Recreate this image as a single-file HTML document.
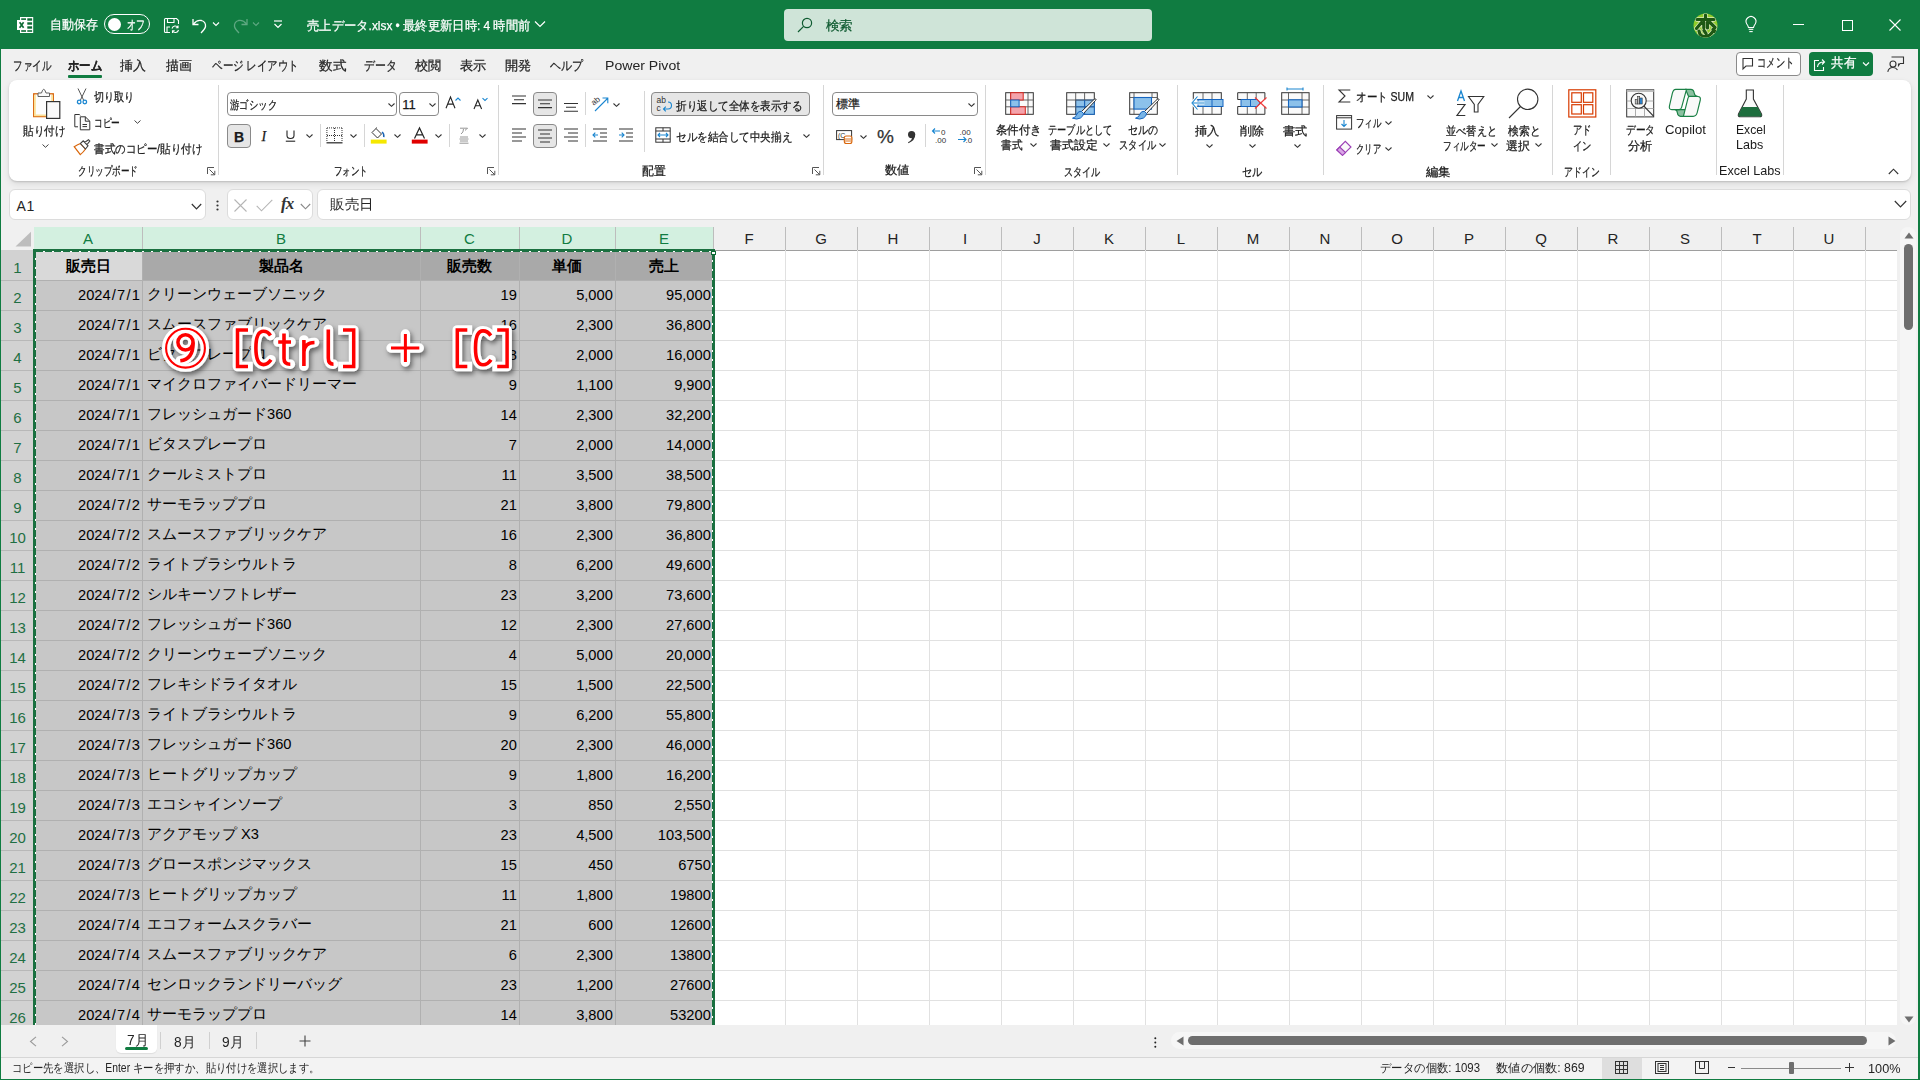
<!DOCTYPE html><html><head><meta charset="utf-8"><style>*{box-sizing:border-box}
html,body{margin:0;padding:0}
body{width:1920px;height:1080px;overflow:hidden;position:relative;background:#f0f0f0;font-family:"Liberation Sans",sans-serif;color:#242424}
.a{position:absolute}
svg{position:absolute;overflow:visible}
#title{position:absolute;left:0;top:0;width:1920px;height:49px;background:#107c41;color:#fff}
#bl{position:absolute;left:0;top:49px;width:1px;height:1032px;background:#107c41;z-index:50}
#br{position:absolute;left:1918px;top:49px;width:2px;height:1032px;background:#107c41;z-index:50}
#bb{position:absolute;left:0;top:1079px;width:1920px;height:1px;background:#107c41;z-index:50}
.tt{position:absolute;white-space:nowrap;font-size:13px;line-height:16px}
.mt{position:absolute;top:57px;font-size:13px;line-height:16px;white-space:nowrap;color:#242424}
#ribbon{position:absolute;left:9px;top:80px;width:1902px;height:101px;background:#fff;border-radius:8px;box-shadow:0 1px 2px rgba(0,0,0,.16),0 3px 7px rgba(0,0,0,.09)}
.rt{position:absolute;font-size:12px;line-height:14px;white-space:nowrap;color:#1a1a1a}
.sep{position:absolute;width:1px;background:#d6d6d6}
.btnp{position:absolute;background:#e6e6e6;border:1px solid #8a8a8a;border-radius:4px}
.box{position:absolute;background:#fff;border:1px solid #8a8a8a;border-radius:4px}
/* formula */
.fbox{position:absolute;top:189px;height:31px;background:#fff;border:1px solid #dcdcdc;border-radius:6px}
/* grid */
#grid{position:absolute;left:0;top:0}
.ch{position:absolute;top:227px;height:23px;background:#f0f0f0;color:#242424;font-size:15px;line-height:23px;text-align:center}
.ch.sel{background:#d3f0e0;color:#107c41}
.chl{position:absolute;top:227px;height:23px;width:1px;background:#bdbdbd}
.chline{position:absolute;left:1px;top:250px;width:1896px;height:1px;background:#9e9e9e}
.corner{position:absolute;left:1px;top:227px;width:33px;height:23px;background:#f0f0f0}
.rh{position:absolute;left:1px;width:33px;height:30px;background:#d2d2d2;color:#1f6f43;font-size:15px;line-height:30px;text-align:center;padding-top:2.5px}
.rhl{position:absolute;left:1px;width:33px;height:1px;background:#b8b8b8}
.selbg{position:absolute;left:34px;top:250px;width:679px;height:775px;background:#c7c7c7}
.hdrbg{position:absolute;left:142px;top:250px;width:571px;height:30px;background:#a9a9a9}
.a1bg{position:absolute;left:34px;top:250px;width:108px;height:30px;background:#d9d9d9}
.hl{position:absolute;left:713px;width:1184px;height:1px;background:#e1e1e1}
.hls{position:absolute;left:34px;width:679px;height:1px;background:#b0b0b0}
.vl{position:absolute;top:250px;width:1px;height:775px;background:#e1e1e1}
.vls{position:absolute;top:250px;width:1px;height:775px;background:#b0b0b0}
.ct{position:absolute;height:30px;font-size:14.67px;line-height:30px;white-space:nowrap;color:#000;padding-top:2px}
.ct.b{font-weight:bold;text-align:center;padding-top:1px}
.ct.l{padding-left:5px}
.ct.r{text-align:right;padding-right:2.2px}
.selb{position:absolute;left:33px;top:249px;width:682px;height:800px;border:3px solid #1a7040}
.sl{padding:0 1.2px}
.antt{position:absolute;left:36px;top:251px;width:676px;height:1px;background:repeating-linear-gradient(90deg,#fff 0 2px,transparent 2px 9px);background-position:-2px 0}
.antl{position:absolute;left:35px;top:252px;width:1px;height:773px;background:repeating-linear-gradient(180deg,#fff 0 2px,transparent 2px 9px);background-position:0 6px}
.antr{position:absolute;left:712px;top:252px;width:1px;height:773px;background:repeating-linear-gradient(180deg,#fff 0 2px,transparent 2px 9px);background-position:0 8px}
.mt{font-size:12.5px;margin-top:-1px}
.rt,.mt,.tt{-webkit-text-stroke:0.25px currentColor}

</style></head><body>
<div id="title">
<svg style="left:17px;top:17px" width="17" height="16" viewBox="0 0 17 16">
<rect x="3" y="0" width="13.2" height="16" fill="#fff"/>
<g fill="#0b6a33"><rect x="4.2" y="1.3" width="4.8" height="1.6"/><rect x="10.3" y="1.3" width="4.8" height="2.4"/><rect x="10.3" y="5.3" width="4.8" height="2.4"/><rect x="10.3" y="9.3" width="4.8" height="2.4"/><rect x="4.2" y="13.2" width="4.8" height="1.6"/><rect x="10.3" y="13.2" width="4.8" height="1.6"/></g>
<rect x="0" y="3" width="9.2" height="10" fill="#fff"/>
<path d="M2.6 5.2 L6.6 10.8 M6.6 5.2 L2.6 10.8" stroke="#0b6a33" stroke-width="1.6"/>
</svg>
<div class="tt" style="transform:scaleX(0.923);transform-origin:0 0;left:50px;top:17px;font-size:12.5px">自動保存</div>
<div class="a" style="left:104px;top:14px;width:46px;height:20px;border:1.3px solid #fff;border-radius:10px"></div>
<div class="a" style="left:108px;top:17.5px;width:13px;height:13px;border-radius:50%;background:#fff"></div>
<div class="tt" style="transform:scaleX(0.692);transform-origin:0 0;left:127px;top:17px;font-size:12.5px">オフ</div>
<svg style="left:163px;top:17px" width="17" height="17" viewBox="0 0 17 17" fill="none" stroke="#fff" stroke-width="1.1">
<path d="M7 15.5 H2.5 Q1.5 15.5 1.5 14.5 V2.5 Q1.5 1.5 2.5 1.5 H13.5 L15.5 3.5 V7"/>
<path d="M4.5 1.5 V5.5 H11 V1.5"/>
<path d="M4 15.5 V10 H7"/>
<path d="M9 11.5 A3.3 3.3 0 0 1 15 10.5 M15 8.5 V10.8 H12.8"/>
<path d="M15.5 13 A3.3 3.3 0 0 1 9.5 14 M9.5 16 V13.7 H11.7"/>
</svg>
<svg style="left:191px;top:17px" width="18" height="17" viewBox="0 0 18 17" fill="none" stroke="#fff" stroke-width="1.3">
<path d="M2 2 V7.5 H7.5"/><path d="M2.5 7 Q6 2.5 10.5 3.5 Q15 5 14.5 9.5 Q14 12 10 16"/>
</svg>
<svg style="left:212px;top:21px" width="8" height="6" viewBox="0 0 8 6" fill="none" stroke="#fff" stroke-width="1.1"><path d="M1 1.5 L4 4.5 L7 1.5"/></svg>
<svg style="left:231px;top:17px" width="18" height="17" viewBox="0 0 18 17" fill="none" stroke="#5fa882" stroke-width="1.3">
<path d="M16 2 V7.5 H10.5"/><path d="M15.5 7 Q12 2.5 7.5 3.5 Q3 5 3.5 9.5 Q4 12 8 16"/>
</svg>
<svg style="left:252px;top:21px" width="8" height="6" viewBox="0 0 8 6" fill="none" stroke="#5fa882" stroke-width="1.1"><path d="M1 1.5 L4 4.5 L7 1.5"/></svg>
<svg style="left:273px;top:20px" width="10" height="9" viewBox="0 0 10 9" fill="none" stroke="#fff" stroke-width="1.2"><path d="M1 1 H9"/><path d="M1.5 4 L5 7.5 L8.5 4"/></svg>
<div class="tt" style="transform:scaleX(0.948);transform-origin:0 0;left:307px;top:18px;font-size:12.5px">売上データ.xlsx • 最終更新日時: 4 時間前</div>
<svg style="left:534px;top:20px" width="12" height="8" viewBox="0 0 12 8" fill="none" stroke="#fff" stroke-width="1.2"><path d="M1 1.5 L6 6.5 L11 1.5"/></svg>
<div class="a" style="left:784px;top:9px;width:368px;height:32px;background:#cfe4d8;border-radius:4px"></div>
<svg style="left:797px;top:17px" width="16" height="16" viewBox="0 0 16 16" fill="none" stroke="#0e5a30" stroke-width="1.2"><circle cx="10" cy="6" r="4.6"/><path d="M6.6 9.4 L1 15"/></svg>
<div class="tt" style="transform:scaleX(1.038);transform-origin:0 0;left:825.6px;top:18px;font-size:13px;color:#0e5a30">検索</div>
<svg style="left:1692.5px;top:12.5px" width="25" height="25" viewBox="0 0 25 25">
<defs><clipPath id="avc"><circle cx="12.5" cy="12.5" r="12"/></clipPath></defs>
<g clip-path="url(#avc)">
<rect x="0" y="0" width="25" height="25" fill="#8fcb2a"/>
<g stroke="#e6efd5" stroke-width="4.6" fill="none" stroke-linecap="round" opacity=".9">
<path d="M4 6.5 H21 M12.5 2 V6.5 M8.5 9.5 L3.5 15.5 M10.8 9 V15 M14.5 9 V15 M17 9.5 L22 14.5 M6 18 Q7 24.5 13 23.5 Q17.5 22.5 19.5 19 M11 17.5 L13 20.5 M20 16.5 L23 19.5"/>
</g>
<g stroke="#1d5713" stroke-width="3.2" fill="none" stroke-linecap="round">
<path d="M4 6.5 H21 M12.5 2 V6.5 M8.5 9.5 L3.5 15.5 M10.8 9 V15 M14.5 9 V15 M17 9.5 L22 14.5 M6 18 Q7 24.5 13 23.5 Q17.5 22.5 19.5 19 M11 17.5 L13 20.5 M20 16.5 L23 19.5"/>
</g>
<path d="M0 0 H25 V4.5 H0 Z" fill="#1d5713" opacity=".0"/>
</g>
</svg>
<svg style="left:1745px;top:17px" width="12" height="16" viewBox="0 0 12 16" fill="none" stroke="#fff" stroke-width="1.1"><path d="M3.5 10.5 Q3 8.5 1.8 7 A4.9 4.9 0 1 1 10.2 7 Q9 8.5 8.5 10.5 Z"/><path d="M3.7 12.3 H8.3"/><path d="M4.3 14.6 H7.7"/></svg>
<div class="a" style="left:1793px;top:24px;width:11px;height:1px;background:#fff"></div>
<div class="a" style="left:1842px;top:19.5px;width:11px;height:11px;border:1px solid #fff"></div>
<svg style="left:1889px;top:19px" width="12" height="12" viewBox="0 0 12 12" stroke="#fff" stroke-width="1.1"><path d="M0.5 0.5 L11.5 11.5 M11.5 0.5 L0.5 11.5"/></svg>
</div>

<!-- tabs -->
<div class="mt" style="transform:scaleX(0.731);transform-origin:0 0;left:13px;top:58.5px">ファイル</div>
<div class="mt" style="transform:scaleX(0.872);transform-origin:0 0;left:68px;top:58.5px;font-weight:bold">ホーム</div>
<div class="a" style="left:68px;top:75px;width:34px;height:2.5px;border-radius:1px;background:#107c41"></div>
<div class="mt" style="transform:scaleX(0.992);transform-origin:0 0;left:120.4px;top:58.5px">挿入</div>
<div class="mt" style="transform:scaleX(0.992);transform-origin:0 0;left:165.6px;top:58.5px">描画</div>
<div class="mt" style="transform:scaleX(0.809);transform-origin:0 0;left:211.6px;top:58.5px">ページ レイアウト</div>
<div class="mt" style="transform:scaleX(1.046);transform-origin:0 0;left:318.8px;top:58.5px">数式</div>
<div class="mt" style="transform:scaleX(0.841);transform-origin:0 0;left:363.8px;top:58.5px">データ</div>
<div class="mt" style="transform:scaleX(1.012);transform-origin:0 0;left:415.3px;top:58.5px">校閲</div>
<div class="mt" style="transform:scaleX(1.012);transform-origin:0 0;left:460.3px;top:58.5px">表示</div>
<div class="mt" style="transform:scaleX(1.012);transform-origin:0 0;left:505.3px;top:58.5px">開発</div>
<div class="mt" style="transform:scaleX(0.844);transform-origin:0 0;left:550.3px;top:58.5px">ヘルプ</div>
<div class="mt" style="transform:scaleX(1.043);transform-origin:0 0;left:604.8px;top:58.5px;-webkit-text-stroke:0;font-size:13.5px">Power Pivot</div>
<!-- comment / share -->
<div class="a" style="left:1736px;top:52px;width:65px;height:24px;border:1px solid #8a8a8a;border-radius:4px;background:#fff"></div>
<svg style="left:1741px;top:57px" width="13" height="14" viewBox="0 0 13 14" fill="none" stroke="#333" stroke-width="1.1"><path d="M1.5 1.5 H11.5 V9 H5 L2 12 V1.5 Z"/></svg>
<div class="mt" style="transform:scaleX(0.712);transform-origin:0 0;left:1757px;top:56px">コメント</div>
<div class="a" style="left:1809px;top:52px;width:64px;height:24px;border-radius:4px;background:#107c41"></div>
<svg style="left:1813px;top:56px" width="15" height="16" viewBox="0 0 15 16" fill="none" stroke="#fff" stroke-width="1.1"><path d="M6 4.5 H1.5 V14.5 H10.5 V11"/><path d="M4.5 11 Q5 6 11 6 M9 3.5 L11.5 6 L9 8.5"/></svg>
<div class="mt" style="transform:scaleX(0.962);transform-origin:0 0;left:1831px;top:56px;color:#fff">共有</div>
<svg style="left:1862px;top:61px" width="8" height="6" viewBox="0 0 8 6" fill="none" stroke="#fff" stroke-width="1.1"><path d="M1 1.5 L4 4.5 L7 1.5"/></svg>
<svg style="left:1887px;top:56px" width="18" height="17" viewBox="0 0 18 17" fill="none" stroke="#333" stroke-width="1.1"><circle cx="6" cy="8" r="3"/><path d="M0.8 15.8 Q1.5 11.5 6 11.5 Q9 11.5 10.5 14"/><path d="M4.5 1 H16.5 V7.5 H13 L11.5 9.5 V7.5"/></svg>
<!-- ribbon panel -->
<div id="ribbon"></div>
<!-- clipboard group -->
<svg style="left:32px;top:88px" width="30" height="32" viewBox="0 0 30 32">
<rect x="1.7" y="5.8" width="19.6" height="22.8" fill="#fdfdfd" stroke="#d9660b" stroke-width="1.3"/>
<path d="M2.9 7 V27.4 H20.1 V7" fill="none" stroke="#fbe199" stroke-width="1.8"/>
<path d="M6 5 H9.5 Q10.5 1.3 11.7 1.3 Q13 1.3 14 5 H17.5 V8.5 H6 Z" fill="#fafafa" stroke="#616161" stroke-width="1"/>
<rect x="14.6" y="13.6" width="13.2" height="16.8" fill="#fafafa" stroke="#333" stroke-width="1.2"/>
</svg>
<div class="rt" style="transform:scaleX(0.881);transform-origin:0 0;left:23.3px;top:124px">貼り付け</div>
<svg style="left:42px;top:143.5px" width="7" height="4" viewBox="0 0 7 4" fill="none" stroke="#424242" stroke-width="1"><path d="M0.5 0.5 L3.5 3.3 L6.5 0.5"/></svg>
<svg style="left:76px;top:88px" width="12" height="17" viewBox="0 0 12 17" fill="none" stroke-width="1">
<path d="M2 0.5 L7.7 12.3 M10 0.5 L4.3 12.3" stroke="#555"/><circle cx="3.2" cy="14" r="1.8" stroke="#1a86d0" stroke-width="1.3"/><circle cx="8.8" cy="14" r="1.8" stroke="#1a86d0" stroke-width="1.3"/>
</svg>
<div class="rt" style="transform:scaleX(0.844);transform-origin:0 0;left:94.4px;top:90.2px">切り取り</div>
<svg style="left:73px;top:113px" width="18" height="18" viewBox="0 0 18 18" fill="none" stroke="#333" stroke-width="1">
<path d="M5 13.8 H1.8 V1.5 H6.3 L7.3 2.3"/><path d="M7.3 3.8 H12.3 L16.8 8.2 V16.8 H7.3 Z" fill="#fafafa"/><path d="M12.3 3.8 V8.2 H16.8"/><path d="M9.5 11.5 H14 M9.5 13.6 H14"/>
</svg>
<div class="rt" style="transform:scaleX(0.728);transform-origin:0 0;left:94.4px;top:116px">コピー</div>
<svg style="left:133.5px;top:120.3px" width="7" height="4" viewBox="0 0 7 4" fill="none" stroke="#424242" stroke-width="1"><path d="M0.5 0.5 L3.5 3.3 L6.5 0.5"/></svg>
<svg style="left:73px;top:139px" width="18" height="17" viewBox="0 0 18 17">
<path d="M1.5 8 L9 13.3 L7 15.8 Z" fill="#fbe199"/>
<path d="M1.2 7.7 Q5 5.5 7.5 4.5 L12.5 10 Q10.5 13 7.3 15.6 Z" fill="#fff" stroke="#d9660b" stroke-width="1.2"/>
<path d="M7.5 4.5 L10.2 1.8 L15 6.8 L12.5 10 Z M11.5 3.5 L15.5 0.7 L16.8 2 L13.8 5.8" fill="#fff" stroke="#424242" stroke-width="1.1"/>
</svg>
<div class="rt" style="transform:scaleX(0.876);transform-origin:0 0;left:94.4px;top:141.7px">書式のコピー/貼り付け</div>
<div class="rt" style="transform:scaleX(0.714);transform-origin:0 0;left:78.3px;top:164px">クリップボード</div>
<svg style="left:207px;top:167px" width="9" height="9" viewBox="0 0 9 9" fill="none" stroke="#555" stroke-width="1"><path d="M0.5 7 V0.5 H7"/><path d="M2.5 2.5 L7.8 7.8 M3.8 7.8 H7.8 V3.8"/></svg>
<div class="sep" style="left:218px;top:85px;height:90px"></div>
<!-- font group -->
<div class="box" style="left:227px;top:92px;width:170px;height:24px"></div>
<div class="rt" style="transform:scaleX(0.783);transform-origin:0 0;left:229.8px;top:98px">游ゴシック</div>
<svg style="left:387.5px;top:102.5px" width="7" height="4" viewBox="0 0 7 4" fill="none" stroke="#333" stroke-width="1.1"><path d="M0.5 0.5 L3.5 3.3 L6.5 0.5"/></svg>
<div class="box" style="left:399px;top:92px;width:40px;height:24px"></div>
<div class="rt" style="transform:scaleX(1.000);transform-origin:0 0;left:402.3px;top:96.5px;font-size:13px;line-height:16px">11</div>
<svg style="left:429px;top:102.5px" width="7" height="4" viewBox="0 0 7 4" fill="none" stroke="#333" stroke-width="1.1"><path d="M0.5 0.5 L3.5 3.3 L6.5 0.5"/></svg>
<svg style="left:445px;top:96px" width="18" height="13" viewBox="0 0 18 13" fill="none" stroke-width="1.1"><path d="M1 12.3 L5.5 1 L10 12.3 M2.8 8.1 H8.2" stroke="#242424"/><path d="M10.5 4.5 L13 2 L15.5 4.5" stroke="#1a86d0"/></svg>
<svg style="left:473px;top:96.5px" width="15" height="13" viewBox="0 0 15 13" fill="none" stroke-width="1.1"><path d="M1 12 L4.8 3 L8.6 12 M2.5 8.8 H7.1" stroke="#242424"/><path d="M9.5 1.2 L12 3.5 L14.5 1.2" stroke="#1a86d0"/></svg>
<div class="btnp" style="left:227px;top:124px;width:24px;height:24px"></div>
<div class="rt" style="left:234px;top:128.5px;font-size:14px;line-height:16px;font-weight:bold">B</div>
<div class="rt" style="left:261.5px;top:128.5px;font-size:14px;line-height:16px;font-family:'Liberation Serif',serif;font-style:italic">I</div>
<svg style="left:285px;top:130px" width="11" height="12" viewBox="0 0 11 12" fill="none" stroke="#242424" stroke-width="1.1"><path d="M2 0.5 V5.5 Q2 8.5 5.5 8.5 Q9 8.5 9 5.5 V0.5"/><path d="M0.8 11.2 H10.2"/></svg>
<svg style="left:306px;top:134px" width="7" height="4" viewBox="0 0 7 4" fill="none" stroke="#333" stroke-width="1.1"><path d="M0.5 0.5 L3.5 3.3 L6.5 0.5"/></svg>
<div class="sep" style="left:320px;top:124px;height:23px"></div>
<svg style="left:326px;top:127px" width="17" height="17" viewBox="0 0 17 17" fill="none" stroke="#333" stroke-width="1" stroke-dasharray="1 1"><path d="M0.9 1 V15 M16 1 V15 M1 0.9 H16 M8.5 1 V15 M1 8.5 H16"/><path d="M0.5 15.8 H16.5" stroke-dasharray="none" stroke-width="1.3"/></svg>
<svg style="left:350px;top:134px" width="7" height="4" viewBox="0 0 7 4" fill="none" stroke="#333" stroke-width="1.1"><path d="M0.5 0.5 L3.5 3.3 L6.5 0.5"/></svg>
<div class="sep" style="left:364px;top:124px;height:23px"></div>
<svg style="left:370px;top:127px" width="17" height="17" viewBox="0 0 17 17"><path d="M6 1.5 L11.5 7 L7.5 11 L2 5.5 Z M6 1.5 L6.5 0.5" fill="none" stroke="#333" stroke-width="1"/><path d="M12 5 Q14.2 6.5 13.8 10.2" fill="none" stroke="#1a64b5" stroke-width="1.5"/><rect x="0.8" y="12.6" width="15.8" height="4" fill="#f5e800"/></svg>
<svg style="left:394px;top:134px" width="7" height="4" viewBox="0 0 7 4" fill="none" stroke="#333" stroke-width="1.1"><path d="M0.5 0.5 L3.5 3.3 L6.5 0.5"/></svg>
<svg style="left:411px;top:127px" width="17" height="17" viewBox="0 0 17 17"><path d="M3.5 11.5 L8.5 1 L13.5 11.5 M5.3 7.8 H11.7" fill="none" stroke="#242424" stroke-width="1.2"/><rect x="0.8" y="12.6" width="15.8" height="4" fill="#e00000"/></svg>
<svg style="left:435px;top:134px" width="7" height="4" viewBox="0 0 7 4" fill="none" stroke="#333" stroke-width="1.1"><path d="M0.5 0.5 L3.5 3.3 L6.5 0.5"/></svg>
<div class="sep" style="left:449px;top:124px;height:23px"></div>
<svg style="left:459px;top:127px" width="10" height="17" viewBox="0 0 10 17" fill="none" stroke="#8a8a8a" stroke-width="0.9"><path d="M1 1.2 H8.5 Q7 3 6 3.3 M4.5 2 Q4.5 5.5 2 7"/><path d="M1 10 H9 M0.5 12 H9.5 M1 14 H9 M0.5 16.2 H9.5"/></svg>
<svg style="left:479px;top:134px" width="7" height="4" viewBox="0 0 7 4" fill="none" stroke="#333" stroke-width="1.1"><path d="M0.5 0.5 L3.5 3.3 L6.5 0.5"/></svg>
<div class="rt" style="transform:scaleX(0.708);transform-origin:0 0;left:334px;top:164px">フォント</div>
<svg style="left:486.5px;top:167px" width="9" height="9" viewBox="0 0 9 9" fill="none" stroke="#555" stroke-width="1"><path d="M0.5 7 V0.5 H7"/><path d="M2.5 2.5 L7.8 7.8 M3.8 7.8 H7.8 V3.8"/></svg>
<div class="sep" style="left:497.5px;top:85px;height:90px"></div>
<!-- alignment -->
<svg style="left:511px;top:95px" width="16" height="10" viewBox="0 0 16 10" fill="none" stroke="#333" stroke-width="1.1"><path d="M1 1 H15 M3 4.8 H13 M1 8.6 H15"/></svg>
<div class="btnp" style="left:533px;top:92px;width:24px;height:24px"></div>
<svg style="left:537px;top:99px" width="16" height="10" viewBox="0 0 16 10" fill="none" stroke="#333" stroke-width="1.1"><path d="M1 1 H15 M3 4.8 H13 M1 8.6 H15"/></svg>
<svg style="left:563px;top:102px" width="16" height="10" viewBox="0 0 16 10" fill="none" stroke="#333" stroke-width="1.1"><path d="M1 1.5 H15 M3 5.3 H13 M1 9.2 H15"/></svg>
<div class="sep" style="left:585px;top:92px;height:23px"></div>
<svg style="left:591px;top:95px" width="18" height="17" viewBox="0 0 18 17" fill="none" stroke-width="1"><text x="0" y="9" font-size="8" fill="#333" stroke="none" transform="rotate(-40 4 6)">ab</text><path d="M4 16 L16.5 3.5 M11.5 3 H16.8 V8.3" stroke="#1a86d0" stroke-width="1.1"/></svg>
<svg style="left:613px;top:103px" width="7" height="4" viewBox="0 0 7 4" fill="none" stroke="#333" stroke-width="1.1"><path d="M0.5 0.5 L3.5 3.3 L6.5 0.5"/></svg>
<svg style="left:511px;top:128px" width="16" height="14" viewBox="0 0 16 14" fill="none" stroke="#333" stroke-width="1.1"><path d="M1 1 H15 M1 5 H11 M1 9 H15 M1 13 H11"/></svg>
<div class="btnp" style="left:533px;top:124px;width:24px;height:24px"></div>
<svg style="left:537px;top:129px" width="16" height="14" viewBox="0 0 16 14" fill="none" stroke="#333" stroke-width="1.1"><path d="M1 1 H15 M3 5 H13 M1 9 H15 M3 13 H13"/></svg>
<svg style="left:563px;top:128px" width="16" height="14" viewBox="0 0 16 14" fill="none" stroke="#333" stroke-width="1.1"><path d="M1 1 H15 M5 5 H15 M1 9 H15 M5 13 H15"/></svg>
<div class="sep" style="left:585px;top:124px;height:23px"></div>
<svg style="left:592px;top:128px" width="16" height="14" viewBox="0 0 16 14" fill="none" stroke-width="1.1"><path d="M1 1 H15 M8 5 H15 M8 9 H15 M1 13 H15" stroke="#333"/><path d="M6 7 H1 M3.3 4.7 L1 7 L3.3 9.3" stroke="#1a86d0"/></svg>
<svg style="left:618px;top:128px" width="16" height="14" viewBox="0 0 16 14" fill="none" stroke-width="1.1"><path d="M1 1 H15 M8 5 H15 M8 9 H15 M1 13 H15" stroke="#333"/><path d="M1 7 H6 M3.7 4.7 L6 7 L3.7 9.3" stroke="#1a86d0"/></svg>
<div class="sep" style="left:644px;top:91px;height:61px"></div>
<div class="btnp" style="left:651px;top:92px;width:159px;height:24px"></div>
<svg style="left:656px;top:95px" width="17" height="18" viewBox="0 0 17 18"><text x="0.5" y="8" font-size="8.5" fill="#333">ab</text><text x="0.5" y="16" font-size="8.5" fill="#333">c</text><path d="M12 7 Q15.5 7 15.5 10.5 Q15.5 14 12 14 H7.5 M9.8 11.7 L7.5 14 L9.8 16.3" fill="none" stroke="#1a86d0" stroke-width="1.1"/></svg>
<div class="rt" style="transform:scaleX(0.879);transform-origin:0 0;left:675.6px;top:98.8px">折り返して全体を表示する</div>
<svg style="left:654.5px;top:127px" width="16" height="16" viewBox="0 0 16 16" fill="none" stroke-width="1"><rect x="0.8" y="0.8" width="14.4" height="14.4" stroke="#333"/><path d="M0.8 4 H15.2 M0.8 12 H15.2 M8 0.8 V4 M8 12 V15.2" stroke="#333"/><path d="M3 8 H13 M5 6 L3 8 L5 10 M11 6 L13 8 L11 10" stroke="#1a86d0" stroke-width="1.1"/></svg>
<div class="rt" style="transform:scaleX(0.880);transform-origin:0 0;left:675.6px;top:130.2px">セルを結合して中央揃え</div>
<svg style="left:803px;top:134px" width="7" height="4" viewBox="0 0 7 4" fill="none" stroke="#333" stroke-width="1.1"><path d="M0.5 0.5 L3.5 3.3 L6.5 0.5"/></svg>
<div class="rt" style="transform:scaleX(0.987);transform-origin:0 0;left:641.6px;top:164.3px">配置</div>
<svg style="left:811.5px;top:167px" width="9" height="9" viewBox="0 0 9 9" fill="none" stroke="#555" stroke-width="1"><path d="M0.5 7 V0.5 H7"/><path d="M2.5 2.5 L7.8 7.8 M3.8 7.8 H7.8 V3.8"/></svg>
<div class="sep" style="left:823px;top:85px;height:90px"></div>
<!-- number -->
<div class="box" style="left:832px;top:92px;width:146px;height:24px"></div>
<div class="rt" style="transform:scaleX(1.000);transform-origin:0 0;left:835.5px;top:96.7px">標準</div>
<svg style="left:968px;top:102.5px" width="7" height="4" viewBox="0 0 7 4" fill="none" stroke="#333" stroke-width="1.1"><path d="M0.5 0.5 L3.5 3.3 L6.5 0.5"/></svg>
<svg style="left:835.5px;top:130px" width="17" height="14" viewBox="0 0 17 14"><rect x="0.6" y="0.6" width="15" height="9" fill="none" stroke="#333" stroke-width="1"/><text x="2" y="8" font-size="7" fill="#333">(C</text><rect x="8.3" y="6" width="7.6" height="7.5" rx="2" fill="#fff" stroke="#d9660b" stroke-width="1.1"/><path d="M8.5 9 H15.8 M8.5 11 H15.8" stroke="#d9660b" stroke-width="0.9"/></svg>
<svg style="left:859.5px;top:134.5px" width="7" height="4" viewBox="0 0 7 4" fill="none" stroke="#333" stroke-width="1.1"><path d="M0.5 0.5 L3.5 3.3 L6.5 0.5"/></svg>
<div class="rt" style="left:877px;top:127px;font-size:19px;line-height:20px;color:#333">%</div>
<svg style="left:907px;top:129.5px" width="9" height="14" viewBox="0 0 9 14"><circle cx="4.6" cy="4.6" r="3.6" fill="#333"/><path d="M8.2 4.6 Q8.3 10.5 1.5 13.3 L1 12.3 Q5 10 5.2 7.5 Z" fill="#333"/></svg>
<div class="sep" style="left:925px;top:124px;height:23px"></div>
<svg style="left:931px;top:127px" width="17" height="17" viewBox="0 0 17 17"><path d="M9 4 H1.5 M4 1.5 L1.5 4 L4 6.5" fill="none" stroke="#1a86d0" stroke-width="1.1"/><text x="10" y="8" font-size="8" fill="#333">0</text><text x="4" y="16" font-size="8" fill="#333">.00</text></svg>
<svg style="left:957px;top:127px" width="17" height="17" viewBox="0 0 17 17"><text x="2.5" y="8" font-size="8" fill="#333">.00</text><path d="M1 12.5 H9 M6.5 10 L9 12.5 L6.5 15" fill="none" stroke="#1a86d0" stroke-width="1.1"/><text x="8.5" y="16" font-size="8" fill="#333">.0</text></svg>
<div class="rt" style="transform:scaleX(1.017);transform-origin:0 0;left:885.2px;top:163.2px">数値</div>
<svg style="left:973.5px;top:166.5px" width="9" height="9" viewBox="0 0 9 9" fill="none" stroke="#555" stroke-width="1"><path d="M0.5 7 V0.5 H7"/><path d="M2.5 2.5 L7.8 7.8 M3.8 7.8 H7.8 V3.8"/></svg>
<div class="sep" style="left:985px;top:85px;height:90px"></div>
<!-- styles -->
<svg style="left:1004.5px;top:91.5px" width="29" height="23" viewBox="0 0 29 23">
<rect x="0.7" y="0.7" width="27.6" height="21.6" fill="#fafafa" stroke="#333" stroke-width="1"/>
<path d="M0.7 8 H28.3 M0.7 14.8 H28.3 M5.7 0.7 V22.3 M23 0.7 V22.3" stroke="#555" stroke-width="0.9"/>
<rect x="5.7" y="0.7" width="12.5" height="7.3" fill="#f4a3ab" stroke="#d9251d" stroke-width="1"/>
<rect x="5.7" y="14.8" width="14.6" height="7.5" fill="#f4a3ab" stroke="#d9251d" stroke-width="1"/>
<rect x="5.7" y="8" width="8.4" height="6.8" fill="#8cc1ea" stroke="#1565c0" stroke-width="1"/>
</svg>
<div class="rt" style="transform:scaleX(0.954);transform-origin:0 0;left:995.6px;top:123px">条件付き</div>
<div class="rt" style="transform:scaleX(0.888);transform-origin:0 0;left:1001.4px;top:138.2px">書式</div>
<svg style="left:1029.5px;top:142.8px" width="7" height="4" viewBox="0 0 7 4" fill="none" stroke="#333" stroke-width="1.1"><path d="M0.5 0.5 L3.5 3.3 L6.5 0.5"/></svg>
<svg style="left:1066px;top:91.5px" width="31" height="28" viewBox="0 0 31 28">
<rect x="0.7" y="0.7" width="27.6" height="21.6" fill="#fafafa" stroke="#333" stroke-width="1"/>
<rect x="9.7" y="8" width="18.6" height="14.3" fill="#8cc1ea" stroke="#1565c0" stroke-width="1"/>
<path d="M0.7 8 H28.3 M0.7 14.8 H28.3 M9.7 0.7 V22.3 M18.6 0.7 V22.3" stroke="#555" stroke-width="0.9"/>
<path d="M9.7 14.8 H28.3 M18.6 8 V22.3" stroke="#1565c0" stroke-width="1"/>
<path d="M29.5 8.5 Q30.5 7.5 29.8 7 Q29 6.5 28 7.5 L15.5 19.5 L17.5 21.5 Z" fill="#fff" stroke="#333" stroke-width="1"/>
<path d="M15.3 19.3 Q12 19 11 22 Q10 25.5 6.5 26.2 Q11 28 14.5 26 Q17.5 24 17.5 21.5 Z" fill="#78b4e6" stroke="#1565c0" stroke-width="1"/>
</svg>
<div class="rt" style="transform:scaleX(0.769);transform-origin:0 0;left:1048.2px;top:123px">テーブルとして</div>
<div class="rt" style="transform:scaleX(0.987);transform-origin:0 0;left:1050.3px;top:138.2px">書式設定</div>
<svg style="left:1102.5px;top:142.8px" width="7" height="4" viewBox="0 0 7 4" fill="none" stroke="#333" stroke-width="1.1"><path d="M0.5 0.5 L3.5 3.3 L6.5 0.5"/></svg>
<svg style="left:1129px;top:91.5px" width="31" height="28" viewBox="0 0 31 28">
<rect x="0.7" y="0.7" width="27.6" height="21.6" fill="#fafafa" stroke="#333" stroke-width="1"/>
<path d="M5 0.7 V22.3 M23 0.7 V5.5 M0.7 5.5 H28.3 M0.7 17 H5" stroke="#555" stroke-width="0.9"/>
<rect x="5" y="5.5" width="17.5" height="11.6" fill="#8cc1ea" stroke="#1565c0" stroke-width="1.1"/>
<path d="M29.5 8.5 Q30.5 7.5 29.8 7 Q29 6.5 28 7.5 L15.5 19.5 L17.5 21.5 Z" fill="#fff" stroke="#333" stroke-width="1"/>
<path d="M15.3 19.3 Q12 19 11 22 Q10 25.5 6.5 26.2 Q11 28 14.5 26 Q17.5 24 17.5 21.5 Z" fill="#78b4e6" stroke="#1565c0" stroke-width="1"/>
</svg>
<div class="rt" style="transform:scaleX(0.839);transform-origin:0 0;left:1128.4px;top:123px">セルの</div>
<div class="rt" style="transform:scaleX(0.771);transform-origin:0 0;left:1119px;top:138.2px">スタイル</div>
<svg style="left:1158.5px;top:142.8px" width="7" height="4" viewBox="0 0 7 4" fill="none" stroke="#333" stroke-width="1.1"><path d="M0.5 0.5 L3.5 3.3 L6.5 0.5"/></svg>
<div class="rt" style="transform:scaleX(0.758);transform-origin:0 0;left:1064.4px;top:165.2px">スタイル</div>
<div class="sep" style="left:1177px;top:85px;height:90px"></div>
<!-- cells -->
<svg style="left:1190.5px;top:91.5px" width="33" height="23" viewBox="0 0 33 23">
<rect x="2.3" y="0.7" width="28" height="21.6" fill="#fafafa" stroke="#333" stroke-width="1"/>
<path d="M12 0.7 V22.3 M21 0.7 V22.3 M2.3 7.5 H30.3 M2.3 14.5 H30.3" stroke="#555" stroke-width="0.9"/>
<rect x="7" y="7.5" width="25" height="7" fill="#8cc1ea" stroke="#1565c0" stroke-width="1"/>
<path d="M21 7.5 V14.5" stroke="#1565c0" stroke-width="1"/>
<path d="M13.5 11 H2 M6.5 4.5 L1 11 L6.5 17.5" fill="none" stroke="#fff" stroke-width="3"/>
<path d="M13.5 11 H2 M6.5 4.5 L1 11 L6.5 17.5" fill="none" stroke="#1a86d0" stroke-width="1.1"/>
</svg>
<div class="rt" style="transform:scaleX(1.017);transform-origin:0 0;left:1195.2px;top:123.5px">挿入</div>
<svg style="left:1205.5px;top:143.5px" width="7" height="4" viewBox="0 0 7 4" fill="none" stroke="#333" stroke-width="1.1"><path d="M0.5 0.5 L3.5 3.3 L6.5 0.5"/></svg>
<svg style="left:1236.5px;top:91.5px" width="31" height="23" viewBox="0 0 31 23">
<path d="M0.7 7.5 V0.7 H27.9 V7.5 M0.7 14.5 V22.3 H27.9 V14.5" fill="#fafafa" stroke="#333" stroke-width="1"/>
<path d="M10.3 0.7 V7.5 M19.2 0.7 V7.5 M10.3 14.5 V22.3 M19.2 14.5 V22.3" stroke="#555" stroke-width="0.9"/>
<path d="M0.7 7.5 H4 M0.7 14.5 H4" stroke="#333" stroke-width="1"/>
<path d="M4 7.5 H20.5 L22.8 11 L20.5 14.5 H4 Z" fill="#8cc1ea" stroke="#1565c0" stroke-width="1"/>
<path d="M13.5 7.5 V14.5" stroke="#1565c0" stroke-width="1"/>
<path d="M18 5.5 L29.5 16.5 M29.5 5.5 L18 16.5" stroke="#f03a3a" stroke-width="1.1"/>
</svg>
<div class="rt" style="transform:scaleX(0.996);transform-origin:0 0;left:1239.7px;top:123.5px">削除</div>
<svg style="left:1249px;top:143.5px" width="7" height="4" viewBox="0 0 7 4" fill="none" stroke="#333" stroke-width="1.1"><path d="M0.5 0.5 L3.5 3.3 L6.5 0.5"/></svg>
<svg style="left:1280.5px;top:86.5px" width="29" height="28" viewBox="0 0 29 28">
<path d="M6 2 H22 M6 0.5 V3.5 M22 0.5 V3.5" stroke="#1a86d0" stroke-width="1.1"/>
<rect x="0.7" y="5.7" width="27.4" height="21.6" fill="#fafafa" stroke="#333" stroke-width="1"/>
<path d="M7.5 5.7 V27.3 M21 5.7 V27.3 M0.7 13 H28.1 M0.7 20 H28.1" stroke="#555" stroke-width="0.9"/>
<rect x="7.5" y="12.8" width="13.5" height="7.2" fill="#8cc1ea" stroke="#1565c0" stroke-width="1.1"/>
</svg>
<div class="rt" style="transform:scaleX(1.012);transform-origin:0 0;left:1283.3px;top:123.5px">書式</div>
<svg style="left:1293.5px;top:143.5px" width="7" height="4" viewBox="0 0 7 4" fill="none" stroke="#333" stroke-width="1.1"><path d="M0.5 0.5 L3.5 3.3 L6.5 0.5"/></svg>
<div class="rt" style="transform:scaleX(0.846);transform-origin:0 0;left:1241.5px;top:164.9px">セル</div>
<div class="sep" style="left:1323px;top:85px;height:90px"></div>
<!-- edit -->
<svg style="left:1337.5px;top:89px" width="13" height="14" viewBox="0 0 13 14" fill="none" stroke="#333" stroke-width="1.1"><path d="M12.3 1 H1 L7 7 L1 13 H12.3"/></svg>
<div class="rt" style="transform:scaleX(0.879);transform-origin:0 0;left:1356px;top:89.9px">オート SUM</div>
<svg style="left:1426.5px;top:94.5px" width="7" height="4" viewBox="0 0 7 4" fill="none" stroke="#333" stroke-width="1.1"><path d="M0.5 0.5 L3.5 3.3 L6.5 0.5"/></svg>
<svg style="left:1336px;top:114.5px" width="17" height="15" viewBox="0 0 17 15" fill="none" stroke-width="1"><rect x="0.6" y="0.6" width="15" height="13.5" stroke="#333"/><path d="M0.6 2.8 H15.6" stroke="#333"/><path d="M8 5 V11.5 M5.5 9 L8 11.5 L10.5 9" stroke="#1a86d0" stroke-width="1.1"/></svg>
<div class="rt" style="transform:scaleX(0.706);transform-origin:0 0;left:1356.3px;top:116px">フィル</div>
<svg style="left:1385px;top:120.5px" width="7" height="4" viewBox="0 0 7 4" fill="none" stroke="#333" stroke-width="1.1"><path d="M0.5 0.5 L3.5 3.3 L6.5 0.5"/></svg>
<svg style="left:1336px;top:140px" width="16" height="16" viewBox="0 0 16 16"><path d="M0.8 10 L9.3 1.3 L15 7 L6.5 15.3 Z" fill="#fafafa" stroke="#9b3fb5" stroke-width="1.1"/><path d="M0.8 10 L3.8 7 L9.5 12.6 L6.5 15.3 Z" fill="#d9a5e6" stroke="#9b3fb5" stroke-width="1.1"/></svg>
<div class="rt" style="transform:scaleX(0.694);transform-origin:0 0;left:1356px;top:141.75px">クリア</div>
<svg style="left:1384.5px;top:146.5px" width="7" height="4" viewBox="0 0 7 4" fill="none" stroke="#333" stroke-width="1.1"><path d="M0.5 0.5 L3.5 3.3 L6.5 0.5"/></svg>
<svg style="left:1456px;top:89.5px" width="30" height="27" viewBox="0 0 30 27" fill="none" stroke-width="1.1">
<path d="M1.5 11 L5 1 L8.5 11 M2.7 7.5 H7.3" stroke="#1a86d0" stroke-width="1.3"/>
<path d="M1 14.5 H9 L1 25.5 H9.3" stroke="#333" stroke-width="1.2"/>
<path d="M12.5 6.5 H27.8 L22 14.5 V22 H18.3 V14.5 Z" stroke="#333" stroke-width="1.1"/>
</svg>
<div class="rt" style="transform:scaleX(0.850);transform-origin:0 0;left:1445.6px;top:124px">並べ替えと</div>
<div class="rt" style="transform:scaleX(0.717);transform-origin:0 0;left:1443px;top:139px">フィルター</div>
<svg style="left:1490.5px;top:142.8px" width="7" height="4" viewBox="0 0 7 4" fill="none" stroke="#333" stroke-width="1.1"><path d="M0.5 0.5 L3.5 3.3 L6.5 0.5"/></svg>
<svg style="left:1508px;top:88px" width="31" height="31" viewBox="0 0 31 31" fill="none" stroke="#333" stroke-width="1.1"><circle cx="19.7" cy="11.3" r="10.2"/><path d="M12.5 18.5 L1 30"/></svg>
<div class="rt" style="transform:scaleX(0.900);transform-origin:0 0;left:1508px;top:124px">検索と</div>
<div class="rt" style="transform:scaleX(0.990);transform-origin:0 0;left:1506px;top:139px">選択</div>
<svg style="left:1534.5px;top:142.8px" width="7" height="4" viewBox="0 0 7 4" fill="none" stroke="#333" stroke-width="1.1"><path d="M0.5 0.5 L3.5 3.3 L6.5 0.5"/></svg>
<div class="rt" style="transform:scaleX(1.031);transform-origin:0 0;left:1426.3px;top:164.6px">編集</div>
<div class="sep" style="left:1552px;top:85px;height:90px"></div>
<!-- add-ins -->
<svg style="left:1567.5px;top:88.5px" width="29" height="29" viewBox="0 0 29 29" fill="none" stroke="#d83b01" stroke-width="1.2"><rect x="0.8" y="0.8" width="27" height="27.2"/><rect x="3.8" y="3.8" width="9.5" height="9.5"/><rect x="15.5" y="3.8" width="9.3" height="9.5"/><rect x="3.8" y="15.7" width="9.5" height="9.3"/><rect x="15.5" y="15.7" width="9.3" height="9.3"/></svg>
<div class="rt" style="transform:scaleX(0.775);transform-origin:0 0;left:1573px;top:123.4px">アド</div>
<div class="rt" style="transform:scaleX(0.775);transform-origin:0 0;left:1573px;top:139px">イン</div>
<div class="rt" style="transform:scaleX(0.737);transform-origin:0 0;left:1564.4px;top:164.6px">アドイン</div>
<div class="sep" style="left:1610px;top:85px;height:90px"></div>
<!-- data analysis -->
<svg style="left:1626px;top:88.5px" width="29" height="29" viewBox="0 0 29 29">
<rect x="0.7" y="0.7" width="27" height="27.2" fill="#fafafa" stroke="#333" stroke-width="1"/>
<rect x="0.7" y="0.7" width="27" height="2.3" fill="#bdbdbd" stroke="none"/>
<path d="M0.7 12 H27.7 M0.7 19.5 H27.7 M9.5 19.5 V27.9 M18.5 19.5 V27.9" stroke="#999" stroke-width="0.8"/>
<circle cx="12.7" cy="11.7" r="7.5" fill="#fafafa" stroke="#333" stroke-width="1.1"/>
<path d="M17.8 17 L27.5 27.2" stroke="#333" stroke-width="1.1"/>
<rect x="9.2" y="10.5" width="2.2" height="4.5" fill="#bdbdbd" stroke="#333" stroke-width=".6"/><rect x="11.5" y="7.3" width="2.2" height="7.7" fill="#bdbdbd" stroke="#333" stroke-width=".6"/><rect x="13.8" y="9" width="2.4" height="6" fill="#2b88d8" stroke="#333" stroke-width=".6"/>
</svg>
<div class="rt" style="transform:scaleX(0.811);transform-origin:0 0;left:1625.6px;top:123.4px">データ</div>
<div class="rt" style="transform:scaleX(1.010);transform-origin:0 0;left:1628px;top:139px">分析</div>
<svg style="left:1662px;top:85px" width="46" height="36" viewBox="0 0 46 36" stroke="#1a8045" stroke-width="1.15" stroke-linejoin="round">
<path d="M23.5 4.3 H28.8 Q31.6 4.3 32.2 8 Q32.8 11.3 35.5 11.3 H26.5 Z" fill="#8bc0a0"/>
<path d="M13 24.6 Q15 24.6 15.4 28 Q15.9 31.3 18.5 31.3 H22 L23.5 24.6 Z" fill="#8bc0a0"/>
<path d="M13.8 4.3 H24.5 L19.6 22.3 Q19 24.6 16.8 24.6 H9.8 Q6.8 24.6 7.4 21.2 L10.4 8.2 Q11.3 4.3 13.8 4.3 Z" fill="#f9f9f9"/>
<path d="M27.6 11.5 H35.8 Q38.9 11.5 38.3 15 L35.2 27.6 Q34.2 31.3 31.2 31.3 H21.4 L26 13.2 Q26.5 11.5 27.6 11.5 Z" fill="#f9f9f9"/>
</svg>
<div class="rt" style="transform:scaleX(1.013);transform-origin:0 0;left:1665px;top:123px;font-size:13px;-webkit-text-stroke:0">Copilot</div>
<div class="sep" style="left:1715.5px;top:85px;height:90px"></div>
<!-- excel labs -->
<svg style="left:1736.5px;top:88.5px" width="26" height="29" viewBox="0 0 26 29">
<path d="M9.3 1 H16.4 V10 L24.5 25 Q25.5 27.8 22.5 27.8 H3.5 Q0.5 27.8 1.5 25 L9.3 10 Z" fill="#fafafa" stroke="#333" stroke-width="1.1"/>
<path d="M5.3 18 H20.7 L24.3 25 Q25.3 27.6 22.5 27.6 H3.5 Q0.7 27.6 1.7 25 Z" fill="#1e6e3e"/>
</svg>
<div class="rt" style="transform:scaleX(0.937);transform-origin:0 0;left:1735.6px;top:123px;font-size:13px;-webkit-text-stroke:0">Excel</div>
<div class="rt" style="transform:scaleX(0.966);transform-origin:0 0;left:1736.25px;top:138px;font-size:13px;-webkit-text-stroke:0">Labs</div>
<div class="rt" style="transform:scaleX(0.969);transform-origin:0 0;left:1719.4px;top:163.6px;font-size:13px;-webkit-text-stroke:0">Excel Labs</div>
<div class="sep" style="left:1783px;top:85px;height:90px"></div>
<svg style="left:1887.5px;top:167.5px" width="11" height="7" viewBox="0 0 11 7" fill="none" stroke="#333" stroke-width="1.1"><path d="M0.8 6 L5.5 1.2 L10.2 6"/></svg>


<div class="fbox" style="left:9px;width:197px"></div>
<div class="a" style="left:16.5px;top:197px;font-size:14px;line-height:18px;color:#242424;letter-spacing:0.6px">A1</div>
<svg style="left:191px;top:202.5px" width="11" height="7" viewBox="0 0 11 7" fill="none" stroke="#333" stroke-width="1.2"><path d="M0.8 1 L5.5 5.8 L10.2 1"/></svg>
<svg style="left:215.5px;top:199.5px" width="3" height="11" viewBox="0 0 3 11" fill="#333"><circle cx="1.5" cy="1.5" r="1.1"/><circle cx="1.5" cy="5.5" r="1.1"/><circle cx="1.5" cy="9.5" r="1.1"/></svg>
<div class="fbox" style="left:227px;width:86px"></div>
<svg style="left:233.5px;top:198.5px" width="13" height="13" viewBox="0 0 13 13" stroke="#b5b5b5" stroke-width="1.1"><path d="M0.5 0.5 L12.5 12.5 M12.5 0.5 L0.5 12.5"/></svg>
<svg style="left:255.5px;top:198.5px" width="17" height="13" viewBox="0 0 17 13" fill="none" stroke="#b5b5b5" stroke-width="1.1"><path d="M0.7 6.8 L5.5 11.8 L16.3 0.8"/></svg>
<div class="a" style="left:281px;top:192.5px;font-family:'Liberation Serif',serif;font-style:italic;font-weight:bold;font-size:17px;line-height:22px;color:#333;letter-spacing:-1px">fx</div>
<svg style="left:299.5px;top:202.5px" width="11" height="7" viewBox="0 0 11 7" fill="none" stroke="#888" stroke-width="1.1"><path d="M0.8 1 L5.5 5.8 L10.2 1"/></svg>
<div class="fbox" style="left:317px;width:1594px"></div>
<div class="a" style="transform:scaleX(1.040);transform-origin:0 0;left:330.2px;top:196px;font-size:14px;line-height:16px;color:#242424">販売日</div>
<svg style="left:1893.5px;top:200px" width="13" height="8" viewBox="0 0 13 8" fill="none" stroke="#333" stroke-width="1.2"><path d="M0.8 1 L6.5 6.8 L12.2 1"/></svg>

<div id="grid">
<div class="a" style="left:34px;top:250px;width:1863px;height:775px;background:#fff"></div>
<div class="ch sel" style="left:34px;width:108px">A</div>
<div class="ch sel" style="left:142px;width:278px">B</div>
<div class="ch sel" style="left:420px;width:99px">C</div>
<div class="ch sel" style="left:519px;width:96px">D</div>
<div class="ch sel" style="left:615px;width:98px">E</div>
<div class="ch" style="left:713px;width:72px">F</div>
<div class="ch" style="left:785px;width:72px">G</div>
<div class="ch" style="left:857px;width:72px">H</div>
<div class="ch" style="left:929px;width:72px">I</div>
<div class="ch" style="left:1001px;width:72px">J</div>
<div class="ch" style="left:1073px;width:72px">K</div>
<div class="ch" style="left:1145px;width:72px">L</div>
<div class="ch" style="left:1217px;width:72px">M</div>
<div class="ch" style="left:1289px;width:72px">N</div>
<div class="ch" style="left:1361px;width:72px">O</div>
<div class="ch" style="left:1433px;width:72px">P</div>
<div class="ch" style="left:1505px;width:72px">Q</div>
<div class="ch" style="left:1577px;width:72px">R</div>
<div class="ch" style="left:1649px;width:72px">S</div>
<div class="ch" style="left:1721px;width:72px">T</div>
<div class="ch" style="left:1793px;width:72px">U</div>
<div class="chl" style="left:142px"></div>
<div class="chl" style="left:420px"></div>
<div class="chl" style="left:519px"></div>
<div class="chl" style="left:615px"></div>
<div class="chl" style="left:713px"></div>
<div class="chl" style="left:785px"></div>
<div class="chl" style="left:857px"></div>
<div class="chl" style="left:929px"></div>
<div class="chl" style="left:1001px"></div>
<div class="chl" style="left:1073px"></div>
<div class="chl" style="left:1145px"></div>
<div class="chl" style="left:1217px"></div>
<div class="chl" style="left:1289px"></div>
<div class="chl" style="left:1361px"></div>
<div class="chl" style="left:1433px"></div>
<div class="chl" style="left:1505px"></div>
<div class="chl" style="left:1577px"></div>
<div class="chl" style="left:1649px"></div>
<div class="chl" style="left:1721px"></div>
<div class="chl" style="left:1793px"></div>
<div class="chl" style="left:1865px"></div>
<div class="corner"></div><div class="chline"></div>
<div class="rh" style="top:250px">1</div>
<div class="rh" style="top:280px">2</div>
<div class="rh" style="top:310px">3</div>
<div class="rh" style="top:340px">4</div>
<div class="rh" style="top:370px">5</div>
<div class="rh" style="top:400px">6</div>
<div class="rh" style="top:430px">7</div>
<div class="rh" style="top:460px">8</div>
<div class="rh" style="top:490px">9</div>
<div class="rh" style="top:520px">10</div>
<div class="rh" style="top:550px">11</div>
<div class="rh" style="top:580px">12</div>
<div class="rh" style="top:610px">13</div>
<div class="rh" style="top:640px">14</div>
<div class="rh" style="top:670px">15</div>
<div class="rh" style="top:700px">16</div>
<div class="rh" style="top:730px">17</div>
<div class="rh" style="top:760px">18</div>
<div class="rh" style="top:790px">19</div>
<div class="rh" style="top:820px">20</div>
<div class="rh" style="top:850px">21</div>
<div class="rh" style="top:880px">22</div>
<div class="rh" style="top:910px">23</div>
<div class="rh" style="top:940px">24</div>
<div class="rh" style="top:970px">25</div>
<div class="rh" style="top:1000px">26</div>
<div class="selbg"></div><div class="hdrbg"></div><div class="a1bg"></div>
<div class="hl" style="top:280px"></div><div class="hls" style="top:280px"></div><div class="rhl" style="top:280px"></div>
<div class="hl" style="top:310px"></div><div class="hls" style="top:310px"></div><div class="rhl" style="top:310px"></div>
<div class="hl" style="top:340px"></div><div class="hls" style="top:340px"></div><div class="rhl" style="top:340px"></div>
<div class="hl" style="top:370px"></div><div class="hls" style="top:370px"></div><div class="rhl" style="top:370px"></div>
<div class="hl" style="top:400px"></div><div class="hls" style="top:400px"></div><div class="rhl" style="top:400px"></div>
<div class="hl" style="top:430px"></div><div class="hls" style="top:430px"></div><div class="rhl" style="top:430px"></div>
<div class="hl" style="top:460px"></div><div class="hls" style="top:460px"></div><div class="rhl" style="top:460px"></div>
<div class="hl" style="top:490px"></div><div class="hls" style="top:490px"></div><div class="rhl" style="top:490px"></div>
<div class="hl" style="top:520px"></div><div class="hls" style="top:520px"></div><div class="rhl" style="top:520px"></div>
<div class="hl" style="top:550px"></div><div class="hls" style="top:550px"></div><div class="rhl" style="top:550px"></div>
<div class="hl" style="top:580px"></div><div class="hls" style="top:580px"></div><div class="rhl" style="top:580px"></div>
<div class="hl" style="top:610px"></div><div class="hls" style="top:610px"></div><div class="rhl" style="top:610px"></div>
<div class="hl" style="top:640px"></div><div class="hls" style="top:640px"></div><div class="rhl" style="top:640px"></div>
<div class="hl" style="top:670px"></div><div class="hls" style="top:670px"></div><div class="rhl" style="top:670px"></div>
<div class="hl" style="top:700px"></div><div class="hls" style="top:700px"></div><div class="rhl" style="top:700px"></div>
<div class="hl" style="top:730px"></div><div class="hls" style="top:730px"></div><div class="rhl" style="top:730px"></div>
<div class="hl" style="top:760px"></div><div class="hls" style="top:760px"></div><div class="rhl" style="top:760px"></div>
<div class="hl" style="top:790px"></div><div class="hls" style="top:790px"></div><div class="rhl" style="top:790px"></div>
<div class="hl" style="top:820px"></div><div class="hls" style="top:820px"></div><div class="rhl" style="top:820px"></div>
<div class="hl" style="top:850px"></div><div class="hls" style="top:850px"></div><div class="rhl" style="top:850px"></div>
<div class="hl" style="top:880px"></div><div class="hls" style="top:880px"></div><div class="rhl" style="top:880px"></div>
<div class="hl" style="top:910px"></div><div class="hls" style="top:910px"></div><div class="rhl" style="top:910px"></div>
<div class="hl" style="top:940px"></div><div class="hls" style="top:940px"></div><div class="rhl" style="top:940px"></div>
<div class="hl" style="top:970px"></div><div class="hls" style="top:970px"></div><div class="rhl" style="top:970px"></div>
<div class="hl" style="top:1000px"></div><div class="hls" style="top:1000px"></div><div class="rhl" style="top:1000px"></div>
<div class="hl" style="top:1030px"></div><div class="hls" style="top:1030px"></div><div class="rhl" style="top:1030px"></div>
<div class="vls" style="left:142px"></div>
<div class="vls" style="left:420px"></div>
<div class="vls" style="left:519px"></div>
<div class="vls" style="left:615px"></div>
<div class="vl" style="left:785px"></div>
<div class="vl" style="left:857px"></div>
<div class="vl" style="left:929px"></div>
<div class="vl" style="left:1001px"></div>
<div class="vl" style="left:1073px"></div>
<div class="vl" style="left:1145px"></div>
<div class="vl" style="left:1217px"></div>
<div class="vl" style="left:1289px"></div>
<div class="vl" style="left:1361px"></div>
<div class="vl" style="left:1433px"></div>
<div class="vl" style="left:1505px"></div>
<div class="vl" style="left:1577px"></div>
<div class="vl" style="left:1649px"></div>
<div class="vl" style="left:1721px"></div>
<div class="vl" style="left:1793px"></div>
<div class="vl" style="left:1865px"></div>
<div class="ct b" style="top:250px;left:34px;width:108px">販売日</div>
<div class="ct b" style="top:250px;left:142px;width:278px">製品名</div>
<div class="ct b" style="top:250px;left:420px;width:99px">販売数</div>
<div class="ct b" style="top:250px;left:519px;width:96px">単価</div>
<div class="ct b" style="top:250px;left:615px;width:98px">売上</div>
<div class="ct r d" style="top:277.5px;left:34px;width:108px">2024<span class="sl">/</span>7<span class="sl">/</span>1</div>
<div class="ct l" style="top:277px;left:142px;width:278px">クリーンウェーブソニック</div>
<div class="ct r" style="top:277.5px;left:420px;width:99px">19</div>
<div class="ct r" style="top:277.5px;left:519px;width:96px">5,000</div>
<div class="ct r" style="top:277.5px;left:615px;width:98px">95,000</div>
<div class="ct r d" style="top:307.5px;left:34px;width:108px">2024<span class="sl">/</span>7<span class="sl">/</span>1</div>
<div class="ct l" style="top:307px;left:142px;width:278px">スムースファブリックケア</div>
<div class="ct r" style="top:307.5px;left:420px;width:99px">16</div>
<div class="ct r" style="top:307.5px;left:519px;width:96px">2,300</div>
<div class="ct r" style="top:307.5px;left:615px;width:98px">36,800</div>
<div class="ct r d" style="top:337.5px;left:34px;width:108px">2024<span class="sl">/</span>7<span class="sl">/</span>1</div>
<div class="ct l" style="top:337px;left:142px;width:278px">ビタスプレープロ</div>
<div class="ct r" style="top:337.5px;left:420px;width:99px">8</div>
<div class="ct r" style="top:337.5px;left:519px;width:96px">2,000</div>
<div class="ct r" style="top:337.5px;left:615px;width:98px">16,000</div>
<div class="ct r d" style="top:367.5px;left:34px;width:108px">2024<span class="sl">/</span>7<span class="sl">/</span>1</div>
<div class="ct l" style="top:367px;left:142px;width:278px">マイクロファイバードリーマー</div>
<div class="ct r" style="top:367.5px;left:420px;width:99px">9</div>
<div class="ct r" style="top:367.5px;left:519px;width:96px">1,100</div>
<div class="ct r" style="top:367.5px;left:615px;width:98px">9,900</div>
<div class="ct r d" style="top:397.5px;left:34px;width:108px">2024<span class="sl">/</span>7<span class="sl">/</span>1</div>
<div class="ct l" style="top:397px;left:142px;width:278px">フレッシュガード360</div>
<div class="ct r" style="top:397.5px;left:420px;width:99px">14</div>
<div class="ct r" style="top:397.5px;left:519px;width:96px">2,300</div>
<div class="ct r" style="top:397.5px;left:615px;width:98px">32,200</div>
<div class="ct r d" style="top:427.5px;left:34px;width:108px">2024<span class="sl">/</span>7<span class="sl">/</span>1</div>
<div class="ct l" style="top:427px;left:142px;width:278px">ビタスプレープロ</div>
<div class="ct r" style="top:427.5px;left:420px;width:99px">7</div>
<div class="ct r" style="top:427.5px;left:519px;width:96px">2,000</div>
<div class="ct r" style="top:427.5px;left:615px;width:98px">14,000</div>
<div class="ct r d" style="top:457.5px;left:34px;width:108px">2024<span class="sl">/</span>7<span class="sl">/</span>1</div>
<div class="ct l" style="top:457px;left:142px;width:278px">クールミストプロ</div>
<div class="ct r" style="top:457.5px;left:420px;width:99px">11</div>
<div class="ct r" style="top:457.5px;left:519px;width:96px">3,500</div>
<div class="ct r" style="top:457.5px;left:615px;width:98px">38,500</div>
<div class="ct r d" style="top:487.5px;left:34px;width:108px">2024<span class="sl">/</span>7<span class="sl">/</span>2</div>
<div class="ct l" style="top:487px;left:142px;width:278px">サーモラッププロ</div>
<div class="ct r" style="top:487.5px;left:420px;width:99px">21</div>
<div class="ct r" style="top:487.5px;left:519px;width:96px">3,800</div>
<div class="ct r" style="top:487.5px;left:615px;width:98px">79,800</div>
<div class="ct r d" style="top:517.5px;left:34px;width:108px">2024<span class="sl">/</span>7<span class="sl">/</span>2</div>
<div class="ct l" style="top:517px;left:142px;width:278px">スムースファブリックケア</div>
<div class="ct r" style="top:517.5px;left:420px;width:99px">16</div>
<div class="ct r" style="top:517.5px;left:519px;width:96px">2,300</div>
<div class="ct r" style="top:517.5px;left:615px;width:98px">36,800</div>
<div class="ct r d" style="top:547.5px;left:34px;width:108px">2024<span class="sl">/</span>7<span class="sl">/</span>2</div>
<div class="ct l" style="top:547px;left:142px;width:278px">ライトブラシウルトラ</div>
<div class="ct r" style="top:547.5px;left:420px;width:99px">8</div>
<div class="ct r" style="top:547.5px;left:519px;width:96px">6,200</div>
<div class="ct r" style="top:547.5px;left:615px;width:98px">49,600</div>
<div class="ct r d" style="top:577.5px;left:34px;width:108px">2024<span class="sl">/</span>7<span class="sl">/</span>2</div>
<div class="ct l" style="top:577px;left:142px;width:278px">シルキーソフトレザー</div>
<div class="ct r" style="top:577.5px;left:420px;width:99px">23</div>
<div class="ct r" style="top:577.5px;left:519px;width:96px">3,200</div>
<div class="ct r" style="top:577.5px;left:615px;width:98px">73,600</div>
<div class="ct r d" style="top:607.5px;left:34px;width:108px">2024<span class="sl">/</span>7<span class="sl">/</span>2</div>
<div class="ct l" style="top:607px;left:142px;width:278px">フレッシュガード360</div>
<div class="ct r" style="top:607.5px;left:420px;width:99px">12</div>
<div class="ct r" style="top:607.5px;left:519px;width:96px">2,300</div>
<div class="ct r" style="top:607.5px;left:615px;width:98px">27,600</div>
<div class="ct r d" style="top:637.5px;left:34px;width:108px">2024<span class="sl">/</span>7<span class="sl">/</span>2</div>
<div class="ct l" style="top:637px;left:142px;width:278px">クリーンウェーブソニック</div>
<div class="ct r" style="top:637.5px;left:420px;width:99px">4</div>
<div class="ct r" style="top:637.5px;left:519px;width:96px">5,000</div>
<div class="ct r" style="top:637.5px;left:615px;width:98px">20,000</div>
<div class="ct r d" style="top:667.5px;left:34px;width:108px">2024<span class="sl">/</span>7<span class="sl">/</span>2</div>
<div class="ct l" style="top:667px;left:142px;width:278px">フレキシドライタオル</div>
<div class="ct r" style="top:667.5px;left:420px;width:99px">15</div>
<div class="ct r" style="top:667.5px;left:519px;width:96px">1,500</div>
<div class="ct r" style="top:667.5px;left:615px;width:98px">22,500</div>
<div class="ct r d" style="top:697.5px;left:34px;width:108px">2024<span class="sl">/</span>7<span class="sl">/</span>3</div>
<div class="ct l" style="top:697px;left:142px;width:278px">ライトブラシウルトラ</div>
<div class="ct r" style="top:697.5px;left:420px;width:99px">9</div>
<div class="ct r" style="top:697.5px;left:519px;width:96px">6,200</div>
<div class="ct r" style="top:697.5px;left:615px;width:98px">55,800</div>
<div class="ct r d" style="top:727.5px;left:34px;width:108px">2024<span class="sl">/</span>7<span class="sl">/</span>3</div>
<div class="ct l" style="top:727px;left:142px;width:278px">フレッシュガード360</div>
<div class="ct r" style="top:727.5px;left:420px;width:99px">20</div>
<div class="ct r" style="top:727.5px;left:519px;width:96px">2,300</div>
<div class="ct r" style="top:727.5px;left:615px;width:98px">46,000</div>
<div class="ct r d" style="top:757.5px;left:34px;width:108px">2024<span class="sl">/</span>7<span class="sl">/</span>3</div>
<div class="ct l" style="top:757px;left:142px;width:278px">ヒートグリップカップ</div>
<div class="ct r" style="top:757.5px;left:420px;width:99px">9</div>
<div class="ct r" style="top:757.5px;left:519px;width:96px">1,800</div>
<div class="ct r" style="top:757.5px;left:615px;width:98px">16,200</div>
<div class="ct r d" style="top:787.5px;left:34px;width:108px">2024<span class="sl">/</span>7<span class="sl">/</span>3</div>
<div class="ct l" style="top:787px;left:142px;width:278px">エコシャインソープ</div>
<div class="ct r" style="top:787.5px;left:420px;width:99px">3</div>
<div class="ct r" style="top:787.5px;left:519px;width:96px">850</div>
<div class="ct r" style="top:787.5px;left:615px;width:98px">2,550</div>
<div class="ct r d" style="top:817.5px;left:34px;width:108px">2024<span class="sl">/</span>7<span class="sl">/</span>3</div>
<div class="ct l" style="top:817px;left:142px;width:278px">アクアモップ X3</div>
<div class="ct r" style="top:817.5px;left:420px;width:99px">23</div>
<div class="ct r" style="top:817.5px;left:519px;width:96px">4,500</div>
<div class="ct r" style="top:817.5px;left:615px;width:98px">103,500</div>
<div class="ct r d" style="top:847.5px;left:34px;width:108px">2024<span class="sl">/</span>7<span class="sl">/</span>3</div>
<div class="ct l" style="top:847px;left:142px;width:278px">グロースポンジマックス</div>
<div class="ct r" style="top:847.5px;left:420px;width:99px">15</div>
<div class="ct r" style="top:847.5px;left:519px;width:96px">450</div>
<div class="ct r" style="top:847.5px;left:615px;width:98px">6750</div>
<div class="ct r d" style="top:877.5px;left:34px;width:108px">2024<span class="sl">/</span>7<span class="sl">/</span>3</div>
<div class="ct l" style="top:877px;left:142px;width:278px">ヒートグリップカップ</div>
<div class="ct r" style="top:877.5px;left:420px;width:99px">11</div>
<div class="ct r" style="top:877.5px;left:519px;width:96px">1,800</div>
<div class="ct r" style="top:877.5px;left:615px;width:98px">19800</div>
<div class="ct r d" style="top:907.5px;left:34px;width:108px">2024<span class="sl">/</span>7<span class="sl">/</span>4</div>
<div class="ct l" style="top:907px;left:142px;width:278px">エコフォームスクラバー</div>
<div class="ct r" style="top:907.5px;left:420px;width:99px">21</div>
<div class="ct r" style="top:907.5px;left:519px;width:96px">600</div>
<div class="ct r" style="top:907.5px;left:615px;width:98px">12600</div>
<div class="ct r d" style="top:937.5px;left:34px;width:108px">2024<span class="sl">/</span>7<span class="sl">/</span>4</div>
<div class="ct l" style="top:937px;left:142px;width:278px">スムースファブリックケア</div>
<div class="ct r" style="top:937.5px;left:420px;width:99px">6</div>
<div class="ct r" style="top:937.5px;left:519px;width:96px">2,300</div>
<div class="ct r" style="top:937.5px;left:615px;width:98px">13800</div>
<div class="ct r d" style="top:967.5px;left:34px;width:108px">2024<span class="sl">/</span>7<span class="sl">/</span>4</div>
<div class="ct l" style="top:967px;left:142px;width:278px">センロックランドリーバッグ</div>
<div class="ct r" style="top:967.5px;left:420px;width:99px">23</div>
<div class="ct r" style="top:967.5px;left:519px;width:96px">1,200</div>
<div class="ct r" style="top:967.5px;left:615px;width:98px">27600</div>
<div class="ct r d" style="top:997.5px;left:34px;width:108px">2024<span class="sl">/</span>7<span class="sl">/</span>4</div>
<div class="ct l" style="top:997px;left:142px;width:278px">サーモラッププロ</div>
<div class="ct r" style="top:997.5px;left:420px;width:99px">14</div>
<div class="ct r" style="top:997.5px;left:519px;width:96px">3,800</div>
<div class="ct r" style="top:997.5px;left:615px;width:98px">53200</div>
<div class="selb"></div><div class="antt"></div><div class="antl"></div><div class="antr"></div><div class="a" style="left:711px;top:250.5px;width:5px;height:4.5px;border:1.3px solid #0b6a33;background:#fff"></div>
</div>
<svg style="left:0;top:0;z-index:40" width="1920" height="1080" viewBox="0 0 1920 1080">
<defs><filter id="sh" x="-20%" y="-20%" width="140%" height="150%"><feDropShadow dx="2" dy="3" stdDeviation="2.6" flood-color="#000" flood-opacity=".5"/></filter></defs>
<g id="glyphs" fill="none" stroke-linecap="round" stroke-linejoin="round">
<g filter="url(#sh)" stroke="#fff">
<circle cx="185.5" cy="348.2" r="19.4" stroke-width="8.4"/>
<circle cx="185.5" cy="342.3" r="7.6" stroke-width="9.5"/>
<path d="M193.1 342.5 C193.3 353.5 189 359.8 180.3 360.8" stroke-width="9.5"/>
<path d="M248 330 H237.5 V366.5 H248" stroke-width="9.6" stroke-linecap="square"/>
<path d="M270.5 335.5 C268.5 332.5 266 331.3 263.5 331.3 C258.5 331.3 255.9 337.5 255.9 348 C255.9 358.5 258.5 364.6 263.5 364.6 C266 364.6 268.8 363 271 359.8" stroke-width="9.6"/>
<path d="M284 333.5 V358.5 Q284 364.2 290.3 364.2 M278.2 342 H291" stroke-width="9.6"/>
<path d="M303.9 340 V366 M303.9 352 Q304.5 342.8 314.5 342.5" stroke-width="9.6"/>
<path d="M328.3 329.5 V358 Q328.3 364.2 333.5 364.2" stroke-width="9.6"/>
<path d="M343 330 H353.7 V366.5 H343" stroke-width="9.6" stroke-linecap="square"/>
<path d="M391 348 H419.3 M405.4 334 V362" stroke-width="9.3"/>
<path d="M467.3 330 H457.3 V366.5 H467.3" stroke-width="9.6" stroke-linecap="square"/>
<path d="M490.8 335.6 C488.5 332.3 486 330.9 483 330.9 C478 330.9 475.5 337.5 475.5 348 C475.5 358.5 478 364.8 483 364.8 C486 364.8 488.8 363.2 491 359.8" stroke-width="9.6"/>
<path d="M497.2 330 H507.1 V366.5 H497.2" stroke-width="9.6" stroke-linecap="square"/>
</g>
<g stroke="#f00">
<circle cx="185.5" cy="348.2" r="19.4" stroke-width="2.1"/>
<circle cx="185.5" cy="342.3" r="7.6" stroke-width="3.5"/>
<path d="M193.1 342.5 C193.3 353.5 189 359.8 180.3 360.8" stroke-width="3.5" stroke-linecap="butt"/>
<path d="M248 330 H237.5 V366.5 H248" stroke-width="3.5" stroke-linecap="butt" stroke-linejoin="miter"/>
<path d="M270.5 335.5 C268.5 332.5 266 331.3 263.5 331.3 C258.5 331.3 255.9 337.5 255.9 348 C255.9 358.5 258.5 364.6 263.5 364.6 C266 364.6 268.8 363 271 359.8" stroke-width="3.6" stroke-linecap="butt"/>
<path d="M284 333.5 V358.5 Q284 364.2 290.3 364.2 M278.2 342 H291" stroke-width="3.6" stroke-linecap="butt"/>
<path d="M303.9 340 V366 M303.9 352 Q304.5 342.8 314.5 342.5" stroke-width="3.6" stroke-linecap="butt"/>
<path d="M328.3 329.5 V358 Q328.3 364.2 333.5 364.2" stroke-width="3.6" stroke-linecap="butt"/>
<path d="M343 330 H353.7 V366.5 H343" stroke-width="3.5" stroke-linecap="butt" stroke-linejoin="miter"/>
<path d="M391 348 H419.3 M405.4 334 V362" stroke-width="3" stroke-linecap="butt"/>
<path d="M467.3 330 H457.3 V366.5 H467.3" stroke-width="3.5" stroke-linecap="butt" stroke-linejoin="miter"/>
<path d="M490.8 335.6 C488.5 332.3 486 330.9 483 330.9 C478 330.9 475.5 337.5 475.5 348 C475.5 358.5 478 364.8 483 364.8 C486 364.8 488.8 363.2 491 359.8" stroke-width="3.6" stroke-linecap="butt"/>
<path d="M497.2 330 H507.1 V366.5 H497.2" stroke-width="3.5" stroke-linecap="butt" stroke-linejoin="miter"/>
</g>
</g>
</svg>

<!-- corner triangle -->
<svg style="left:14px;top:231px" width="18" height="16" viewBox="0 0 18 16"><path d="M17 0.8 V15.5 H1.5 Z" fill="#bdbdbd"/></svg>
<!-- vertical scrollbar -->
<div class="a" style="left:1897px;top:227px;width:21px;height:798px;background:#f0f0f0"></div>
<div class="a" style="left:1900px;top:227px;width:16px;height:798px;border-radius:8px;background:#f5f5f5"></div>
<svg style="left:1903.5px;top:231.5px" width="10" height="7" viewBox="0 0 10 7"><path d="M5 0.5 L9.5 6.5 H0.5 Z" fill="#6e6e6e"/></svg>
<div class="a" style="left:1904px;top:243.5px;width:9px;height:86px;border-radius:4.5px;background:#6e6e6e"></div>
<svg style="left:1903.5px;top:1015.5px" width="10" height="7" viewBox="0 0 10 7"><path d="M0.5 0.5 H9.5 L5 6.5 Z" fill="#6e6e6e"/></svg>
<!-- sheet tab bar -->
<div class="a" style="left:0;top:1025px;width:1920px;height:32px;background:#f0f0f0"></div>
<svg style="left:28.5px;top:1035.5px" width="8" height="11" viewBox="0 0 8 11" fill="none" stroke="#9a9a9a" stroke-width="1.1"><path d="M7 0.8 L1.5 5.5 L7 10.2"/></svg>
<svg style="left:60.5px;top:1035.5px" width="8" height="11" viewBox="0 0 8 11" fill="none" stroke="#9a9a9a" stroke-width="1.1"><path d="M1 0.8 L6.5 5.5 L1 10.2"/></svg>
<div class="a" style="left:116px;top:1025px;width:41px;height:28px;background:#fff;border-radius:0 0 5px 5px;box-shadow:0 1px 1px rgba(0,0,0,.08)"></div>
<div class="a" style="transform:scaleX(0.982);transform-origin:0 0;left:126.6px;top:1031.5px;font-size:14px;line-height:16px;color:#242424">7月</div>
<div class="a" style="left:125px;top:1047px;width:23px;height:3px;border-radius:1.5px;background:#107c41"></div>
<div class="sep" style="left:160px;top:1032px;height:17px;background:#d0d0d0"></div>
<div class="a" style="transform:scaleX(0.982);transform-origin:0 0;left:174.4px;top:1034px;font-size:14px;line-height:16px;color:#242424">8月</div>
<div class="sep" style="left:208.5px;top:1032px;height:17px;background:#d0d0d0"></div>
<div class="a" style="transform:scaleX(0.982);transform-origin:0 0;left:222.2px;top:1034px;font-size:14px;line-height:16px;color:#242424">9月</div>
<div class="sep" style="left:256px;top:1032px;height:17px;background:#d0d0d0"></div>
<svg style="left:299px;top:1035px" width="12" height="12" viewBox="0 0 12 12" stroke="#424242" stroke-width="1.1"><path d="M6 0.5 V11.5 M0.5 6 H11.5"/></svg>
<svg style="left:1154px;top:1036.5px" width="3" height="11" viewBox="0 0 3 11" fill="#222"><circle cx="1.3" cy="1.3" r="1"/><circle cx="1.3" cy="5.5" r="1"/><circle cx="1.3" cy="9.7" r="1"/></svg>
<div class="a" style="left:1171px;top:1032px;width:725px;height:17px;border-radius:8.5px;background:#f6f6f6"></div>
<svg style="left:1175.5px;top:1035.5px" width="8" height="10" viewBox="0 0 8 10"><path d="M7.5 0.5 V9.5 L0.5 5 Z" fill="#6e6e6e"/></svg>
<div class="a" style="left:1187.5px;top:1036px;width:679px;height:9px;border-radius:4.5px;background:#6e6e6e"></div>
<svg style="left:1888px;top:1035.5px" width="8" height="10" viewBox="0 0 8 10"><path d="M0.5 0.5 V9.5 L7.5 5 Z" fill="#6e6e6e"/></svg>
<!-- status bar -->
<div class="a" style="left:0;top:1057px;width:1920px;height:1px;background:#d6d6d6"></div>
<div class="a" style="left:0;top:1058px;width:1920px;height:22px;background:#f3f3f3"></div>
<div class="a" style="transform:scaleX(0.864);transform-origin:0 0;left:11.5px;top:1060.5px;font-size:12px;line-height:14px;color:#242424">コピー先を選択し、Enter キーを押すか、貼り付けを選択します。</div>
<div class="a" style="transform:scaleX(0.949);transform-origin:0 0;left:1380.4px;top:1060.5px;font-size:12px;line-height:14px;color:#242424">データの個数: 1093</div>
<div class="a" style="transform:scaleX(1.021);transform-origin:0 0;left:1495.6px;top:1060.5px;font-size:12px;line-height:14px;color:#242424">数値の個数: 869</div>
<div class="a" style="left:1602px;top:1058px;width:40px;height:21px;background:#dedede"></div>
<svg style="left:1615px;top:1061px" width="13" height="13" viewBox="0 0 13 13" fill="none" stroke="#333" stroke-width="1"><rect x="0.5" y="0.5" width="12" height="12"/><path d="M4.5 0.5 V12.5 M8.5 0.5 V12.5 M0.5 4.5 H12.5 M0.5 8.5 H12.5"/></svg>
<svg style="left:1655px;top:1061px" width="14" height="13" viewBox="0 0 14 13" fill="none" stroke="#333" stroke-width="1"><rect x="0.5" y="0.5" width="13" height="12"/><rect x="3" y="2.5" width="8" height="8"/><path d="M5 4.5 H9 M5 6.5 H9 M5 8.5 H9"/></svg>
<svg style="left:1694.5px;top:1061px" width="14" height="13" viewBox="0 0 14 13" fill="none" stroke="#333" stroke-width="1"><rect x="0.5" y="0.5" width="13" height="12"/><path d="M4.5 0.5 V7.5 H9.5 V0.5"/></svg>
<div class="a" style="left:1728px;top:1067px;width:7px;height:1px;background:#333"></div>
<div class="a" style="left:1740.5px;top:1067.5px;width:100px;height:1px;background:#8a8a8a"></div>
<div class="a" style="left:1789px;top:1062px;width:5px;height:12px;border-radius:1px;background:#6e6e6e"></div>
<svg style="left:1845px;top:1062.5px" width="9" height="9" viewBox="0 0 9 9" stroke="#333" stroke-width="1"><path d="M4.5 0 V9 M0 4.5 H9"/></svg>
<div class="a" style="transform:scaleX(0.977);transform-origin:0 0;left:1867.5px;top:1060.5px;font-size:13px;line-height:16px;color:#242424">100%</div>
<div id="bl"></div><div id="br"></div><div id="bb"></div>

</body></html>
